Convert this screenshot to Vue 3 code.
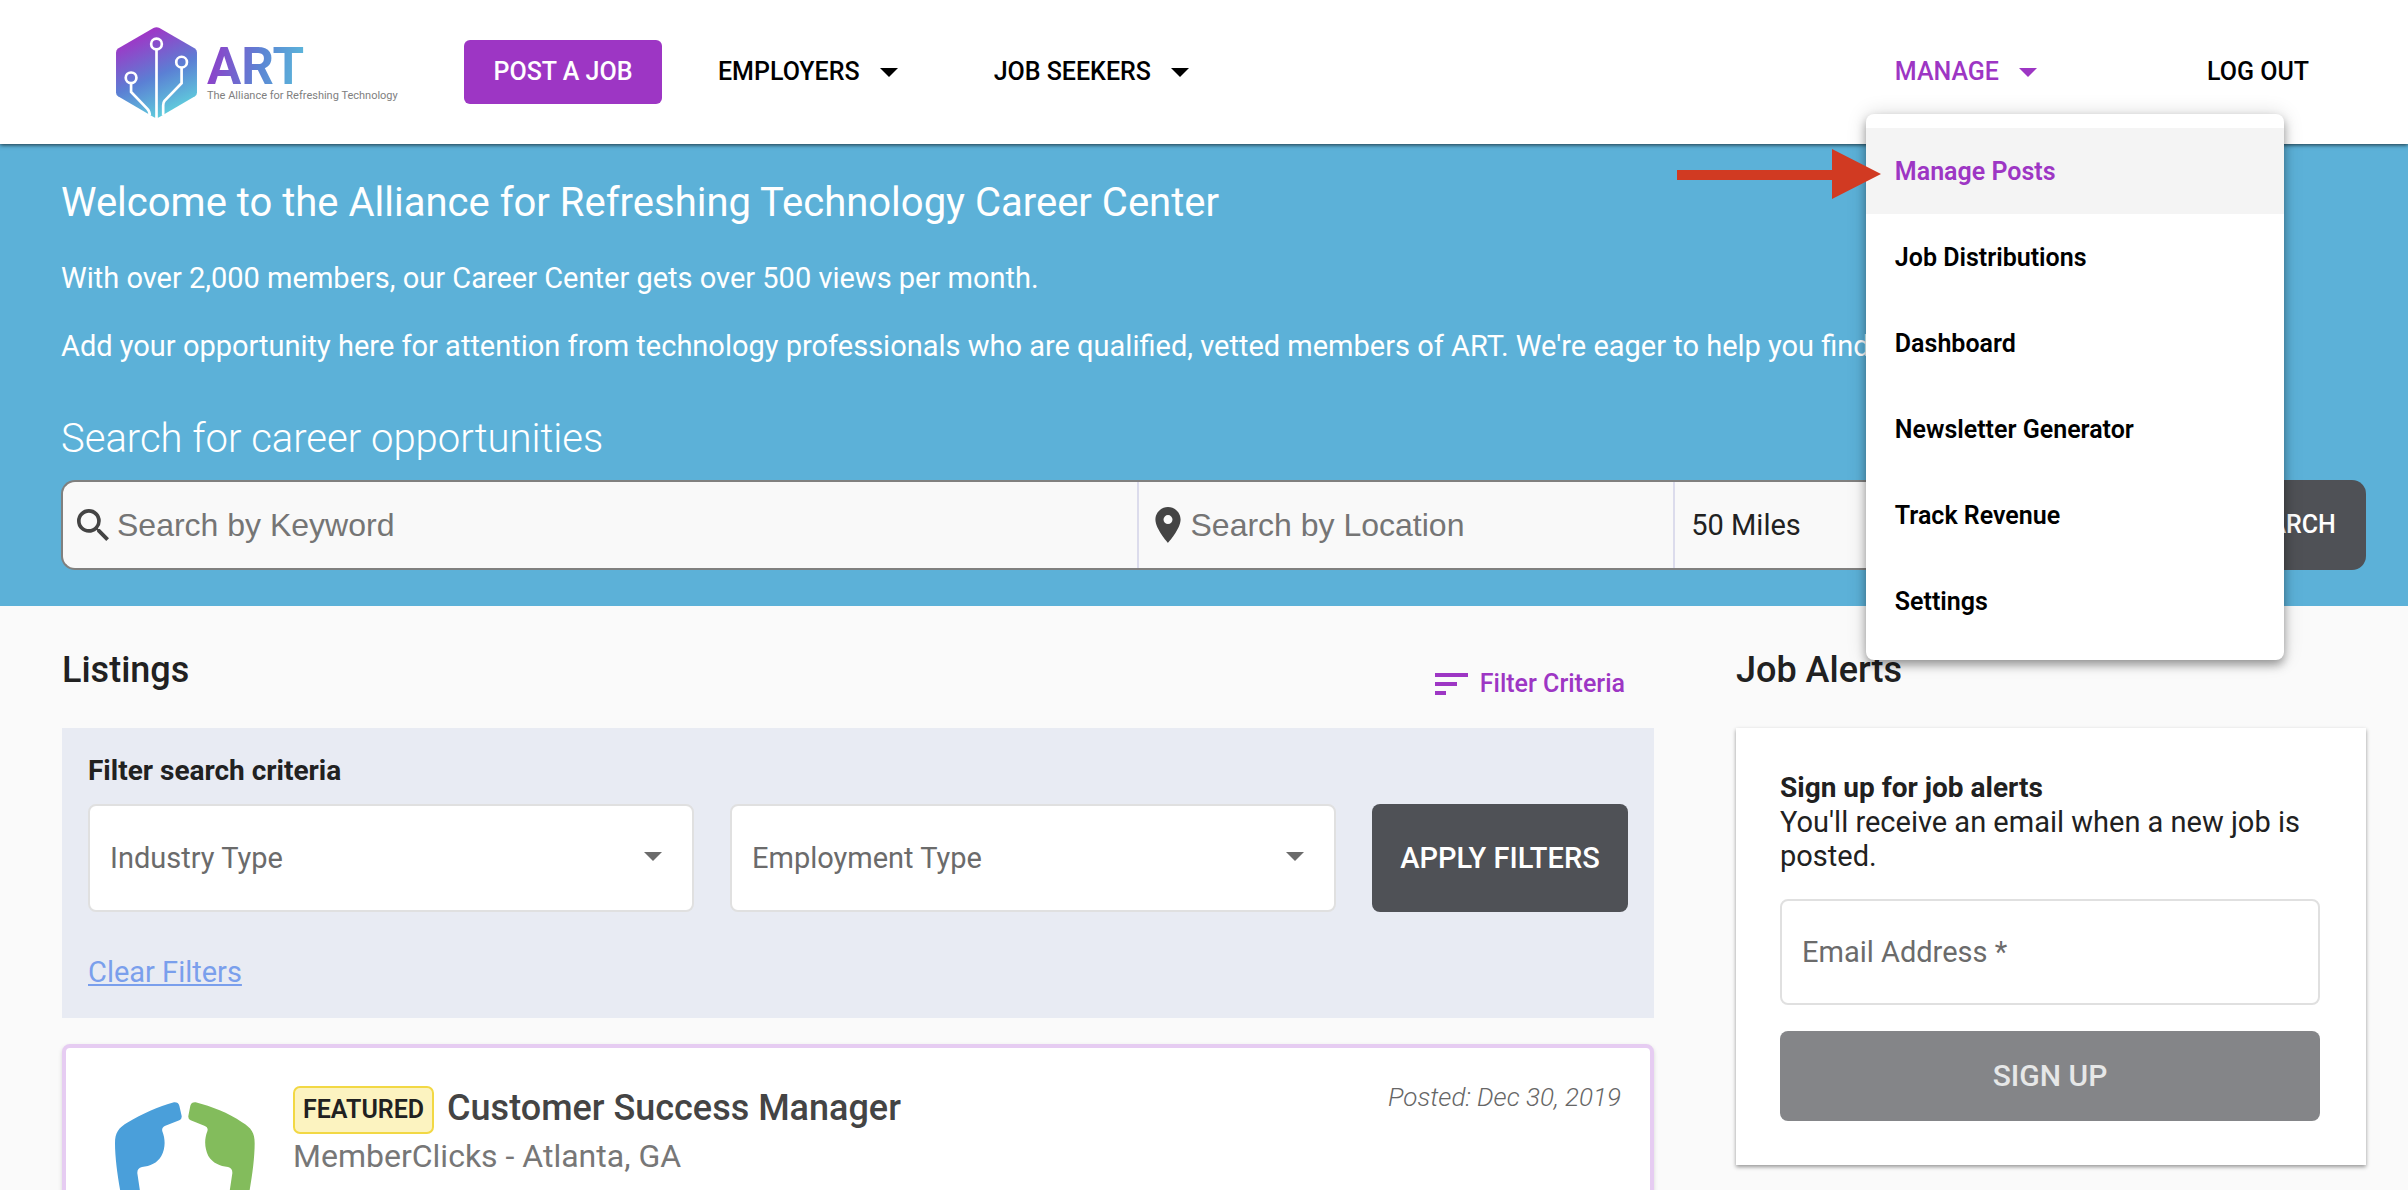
<template>
  <div class="page">
    <header class="topbar">
      <a href="#" class="logo">
        <svg class="logo-mark" viewBox="0 0 242 272" aria-hidden="true">
          <defs>
            <linearGradient id="hex" x1="0.25" y1="0" x2="0.65" y2="1">
              <stop offset="0.08" stop-color="#a035c6" />
              <stop offset="0.55" stop-color="#5b7fd4" />
              <stop offset="0.95" stop-color="#5fcbdc" />
            </linearGradient>
          </defs>
          <path
            d="M112 3 Q121 -2 130 3 L236 64 Q242 68 242 76 V196 Q242 203 236 207 L130 269 Q121 274 112 269 L6 207 Q0 203 0 196 V76 Q0 68 6 64 Z"
            fill="url(#hex)"
          />
          <g fill="none" stroke="#fff" stroke-width="8">
            <circle cx="121" cy="51" r="16" />
            <circle cx="196" cy="105" r="16" />
            <circle cx="45" cy="152" r="16" />
            <path d="M121 67 V272" />
            <path d="M196 121 V168 L145 221 Q141 226 141 234 V264" />
            <path d="M45 168 V194 L93 244 Q101 252 101 264" />
          </g>
        </svg>
        <span class="logo-words">
          <span class="logo-name">ART</span>
          <span class="logo-tag">The Alliance for Refreshing Technology</span>
        </span>
      </a>
      <button type="button" class="post-btn">POST A JOB</button>
      <nav class="nav-left">
        <button type="button" class="nav-btn">
          EMPLOYERS
          <svg class="caret" viewBox="0 0 18 9"><path d="M0 0h18l-9 9z" fill="currentColor" /></svg>
        </button>
        <button type="button" class="nav-btn">
          JOB SEEKERS
          <svg class="caret" viewBox="0 0 18 9"><path d="M0 0h18l-9 9z" fill="currentColor" /></svg>
        </button>
      </nav>
      <nav class="nav-right">
        <div class="manage">
          <button type="button" class="nav-btn active" @click="menuOpen = !menuOpen">
            MANAGE
            <svg class="caret" viewBox="0 0 18 9"><path d="M0 0h18l-9 9z" fill="currentColor" /></svg>
          </button>
          <div v-if="menuOpen" class="menu">
            <a
              v-for="item in menuItems"
              :key="item"
              href="#"
              class="menu-item"
              :class="{ selected: item === current }"
              @click.prevent="current = item"
            >{{ item }}</a>
            <svg class="pointer" viewBox="0 0 204 50" aria-hidden="true">
              <path d="M0 21h155V0l49 25-49 25V31H0z" fill="#d13a22" />
            </svg>
          </div>
        </div>
        <a href="#" class="nav-btn">LOG OUT</a>
      </nav>
    </header>

    <section class="hero">
      <h1>Welcome to the Alliance for Refreshing Technology Career Center</h1>
      <p>With over 2,000 members, our Career Center gets over 500 views per month.</p>
      <p>
        Add your opportunity here for attention from technology professionals who are qualified, vetted members of ART. We're eager to help you find t
      </p>
      <h2>Search for career opportunities</h2>
      <form class="search" @submit.prevent>
        <div class="fields">
          <label class="field keyword">
            <svg class="search-icon" viewBox="3 3 17.5 17.5">
              <path
                fill="currentColor"
                d="M15.5 14h-.79l-.28-.27A6.471 6.471 0 0 0 16 9.5 6.5 6.5 0 1 0 9.5 16c1.61 0 3.09-.59 4.23-1.57l.27.28v.79l5 4.99L20.49 19l-4.99-5zm-6 0C7.01 14 5 11.99 5 9.5S7.01 5 9.5 5 14 7.01 14 9.5 11.99 14 9.5 14z"
              />
            </svg>
            <input v-model="keyword" type="text" placeholder="Search by Keyword" aria-label="Search by Keyword" />
          </label>
          <label class="field">
            <svg class="pin-icon" viewBox="5 2 14 20">
              <path
                fill="currentColor"
                d="M12 2C8.13 2 5 5.13 5 9c0 5.25 7 13 7 13s7-7.75 7-13c0-3.87-3.13-7-7-7zm0 9.5a2.5 2.5 0 0 1 0-5 2.5 2.5 0 0 1 0 5z"
              />
            </svg>
            <input v-model="location" type="text" placeholder="Search by Location" aria-label="Search by Location" />
          </label>
          <div class="field">
            <select v-model="radius" aria-label="Radius">
              <option>50 Miles</option>
            </select>
          </div>
        </div>
        <button type="submit" class="search-btn">SEARCH</button>
      </form>
    </section>

    <main class="content">
      <section>
        <div class="section-head">
          <h2>Listings</h2>
          <button type="button" class="criteria" @click="showFilters = !showFilters">
            <svg viewBox="0 0 33 22"><path d="M0 0h33v4H0zM0 9h22v4H0zM0 18h11v4H0z" fill="currentColor" /></svg>
            Filter Criteria
          </button>
        </div>

        <form v-if="showFilters" class="filters" @submit.prevent>
          <h3>Filter search criteria</h3>
          <div class="filter-row">
            <div v-for="filter in filters" :key="filter" class="select-box">
              <select :aria-label="filter">
                <option>{{ filter }}</option>
              </select>
              <svg class="caret" viewBox="0 0 18 9"><path d="M0 0h18l-9 9z" fill="currentColor" /></svg>
            </div>
            <button type="submit" class="apply">APPLY FILTERS</button>
          </div>
          <a href="#" class="clear">Clear Filters</a>
        </form>

        <article class="job">
          <svg class="job-logo" viewBox="42 60 426 300" aria-hidden="true">
            <path
              fill="#4a9fda"
              d="M222 67 Q235 66 238 77 L245 108 Q246 117 238 121 L196 137 Q184 142 187 154 C197 180 196 205 184 228 C172 249 150 259 126 261 Q111 264 112 280 L124 360 H66 C56 310 45 240 45 190 C45 158 55 144 84 127 C125 103 175 80 222 67 Z"
            />
            <path
              fill="#83bc5c"
              d="M287 67 Q274 66 271 77 L265 108 Q264 117 272 121 L313 137 Q326 142 322 154 C312 180 314 205 325 228 C338 249 360 259 384 261 Q398 264 397 280 L385 360 H443 C454 310 464 240 464 190 C464 158 454 144 426 127 C385 98 335 80 287 67 Z"
            />
          </svg>
          <div class="job-body">
            <div class="job-title">
              <span class="badge">FEATURED</span>
              <h3>Customer Success Manager</h3>
            </div>
            <p>MemberClicks - Atlanta, GA</p>
          </div>
          <span class="posted">Posted: Dec 30, 2019</span>
        </article>
      </section>

      <aside>
        <div class="section-head">
          <h2>Job Alerts</h2>
        </div>
        <form class="alerts" @submit.prevent>
          <h3>Sign up for job alerts</h3>
          <p>You'll receive an email when a new job is posted.</p>
          <input v-model="email" type="email" placeholder="Email Address *" aria-label="Email Address" />
          <button type="submit" :disabled="!email">SIGN UP</button>
        </form>
      </aside>
    </main>
  </div>
</template>

<script setup>
import { ref } from 'vue';

const menuOpen = ref(true);
const current = ref('Manage Posts');
const menuItems = [
  'Manage Posts',
  'Job Distributions',
  'Dashboard',
  'Newsletter Generator',
  'Track Revenue',
  'Settings',
];

const keyword = ref('');
const location = ref('');
const radius = ref('50 Miles');

const showFilters = ref(true);
const filters = ['Industry Type', 'Employment Type'];

const email = ref('');
</script>

<style>
body {
  margin: 0;
  background: #fafafa;
}
</style>

<style scoped>
.page {
  height: 100vh;
  overflow: hidden;
  font-family: Roboto, "Liberation Sans", sans-serif;
  font-size: 29px;
  line-height: 34px;
  color: #212121;
}

h1,
h2,
h3,
p {
  margin: 0;
}

button,
input,
select {
  font: inherit;
  color: inherit;
  border: none;
  background: none;
  padding: 0;
  margin: 0;
  appearance: none;
  outline: none;
}

button {
  cursor: pointer;
}

.caret {
  width: 18px;
  height: 9px;
}

/* top bar */
.topbar {
  position: relative;
  z-index: 2;
  display: flex;
  align-items: center;
  height: 144px;
  padding: 0 99px 0 116px;
  background: #fff;
  box-shadow: 0 1px 4px rgba(0, 0, 0, 0.7);
}

.logo {
  display: flex;
  gap: 10px;
  width: 348px;
  text-decoration: none;
}

.logo-mark {
  width: 81px;
  height: 91px;
}

.logo-words {
  display: flex;
  flex-direction: column;
  padding-top: 17px;
}

.logo-name {
  align-self: flex-start;
  font-size: 51px;
  font-weight: 700;
  line-height: 46px;
  color: transparent;
  background: linear-gradient(100deg, #9338c8, #5b86d4 55%, #5bbcdb);
  background-clip: text;
}

.logo-tag {
  font-size: 11px;
  line-height: 12px;
  color: #808080;
}

.post-btn {
  width: 198px;
  height: 64px;
  border-radius: 6px;
  background: #9d36c4;
  color: #fff;
  font-size: 25px;
  font-weight: 500;
}

.nav-btn {
  display: flex;
  align-items: center;
  gap: 20px;
  font-size: 25px;
  font-weight: 500;
  color: #000;
  text-decoration: none;
}

.nav-btn.active {
  color: #9d36c4;
}

.nav-left {
  display: flex;
  gap: 96px;
  margin-left: 56px;
}

.nav-right {
  display: flex;
  gap: 170px;
  margin-left: auto;
}

.manage {
  position: relative;
}

.menu {
  position: absolute;
  top: 59px;
  left: -29px;
  width: 418px;
  padding: 14px 0 16px;
  border-radius: 8px;
  background: #fff;
  box-shadow: 0 5px 10px rgba(0, 0, 0, 0.35), 0 0 20px rgba(0, 0, 0, 0.15);
}

.menu-item {
  display: block;
  padding: 2px 29px 0;
  font-size: 25px;
  font-weight: 600;
  line-height: 84px;
  color: #000;
  text-decoration: none;
}

.menu-item.selected {
  background: #f4f4f4;
  color: #9d36c4;
}

.pointer {
  position: absolute;
  top: 35px;
  left: -189px;
  width: 204px;
  height: 50px;
}

/* hero */
.hero {
  padding: 35px 42px 36px 61px;
  background: #5cb1d8;
  color: #fff;
}

.hero h1 {
  font-size: 40px;
  font-weight: 400;
  line-height: 48px;
}

.hero p {
  margin-top: 34px;
  white-space: nowrap;
}

.hero h2 {
  margin-top: 52px;
  font-size: 40px;
  font-weight: 300;
  line-height: 48px;
}

.search {
  display: flex;
  height: 90px;
  margin-top: 17px;
}

.fields {
  flex: 1;
  display: grid;
  grid-template-columns: 2fr 1fr 1fr;
  box-sizing: border-box;
  border: 2px solid #80807f;
  border-right: none;
  border-radius: 14px 0 0 14px;
  background: #f9f9f9;
}

.field {
  display: flex;
  align-items: center;
  gap: 10px;
  min-width: 0;
  padding-left: 16px;
  border-left: 2px solid #dcdcec;
  color: #444;
}

.field.keyword {
  gap: 8px;
  padding-left: 14px;
  border-left: none;
}

.field input {
  flex: 1;
  min-width: 0;
  font-family: "Liberation Sans", Arial, sans-serif;
  font-size: 32px;
  line-height: 40px;
}

.field input::placeholder {
  color: #757575;
  opacity: 1;
}

.field select {
  flex: 1;
  color: #212121;
}

.search-icon {
  width: 32px;
  height: 32px;
}

.pin-icon {
  width: 26px;
  height: 36px;
}

.search-btn {
  width: 156px;
  border-radius: 0 14px 14px 0;
  background: #4f5156;
  color: #fff;
  font-size: 25px;
  font-weight: 500;
}

/* listings */
.content {
  display: grid;
  grid-template-columns: 1592fr 630fr;
  gap: 82px;
  padding: 42px 42px 0 62px;
}

.section-head {
  display: flex;
  justify-content: space-between;
  height: 53px;
  margin-bottom: 27px;
}

.section-head h2 {
  font-size: 36px;
  font-weight: 500;
  line-height: 44px;
}

.criteria {
  align-self: flex-end;
  display: flex;
  align-items: center;
  gap: 12px;
  margin-right: 29px;
  font-size: 25px;
  font-weight: 500;
  color: #9d36c4;
}

.criteria svg {
  width: 33px;
  height: 22px;
}

.filters {
  padding: 25px 26px 29px;
  background: #e8ebf3;
}

.filters h3 {
  font-size: 28px;
  font-weight: 700;
  line-height: 36px;
}

.filter-row {
  display: flex;
  gap: 36px;
  height: 108px;
  margin: 15px 0 43px;
}

.select-box {
  position: relative;
  flex: 1;
  display: flex;
  color: #6b6b6b;
}

.select-box select {
  width: 100%;
  box-sizing: border-box;
  padding-left: 20px;
  border: 2px solid #e0e0e0;
  border-radius: 8px;
  background: #fff;
}

.select-box .caret {
  position: absolute;
  top: 48px;
  right: 32px;
}

.apply {
  width: 256px;
  border-radius: 8px;
  background: #4f5156;
  color: #fff;
  font-size: 29px;
  font-weight: 500;
}

.clear {
  display: inline-block;
  vertical-align: top;
  color: #7a9fec;
}

.job {
  display: flex;
  align-items: flex-start;
  box-sizing: border-box;
  min-height: 260px;
  margin-top: 26px;
  padding: 32px 29px 32px 48px;
  border: 4px solid #e6ccf2;
  border-radius: 8px;
  background: #fff;
  box-shadow: 0 2px 4px rgba(0, 0, 0, 0.15);
}

.job-logo {
  width: 142px;
  height: 100px;
  margin-top: 20px;
}

.job-body {
  flex: 1;
  margin: 6px 0 0 37px;
}

.job-title {
  display: flex;
  align-items: flex-start;
  gap: 13px;
}

.badge {
  padding: 0 8px;
  border: 2px solid #f2d844;
  border-radius: 7px;
  background: #fcf3c0;
  font-size: 25px;
  font-weight: 600;
  line-height: 44px;
}

.job h3 {
  font-size: 36px;
  font-weight: 500;
  line-height: 44px;
  color: #444;
}

.job p {
  margin-top: 2px;
  font-size: 32px;
  line-height: 40px;
  color: #777;
}

.posted {
  font-size: 26px;
  font-style: italic;
  font-weight: 300;
  color: #666;
}

/* job alerts */
.alerts {
  display: flex;
  flex-direction: column;
  padding: 43px 46px 44px 44px;
  background: #fff;
  box-shadow: 0 2px 4px rgba(0, 0, 0, 0.4);
}

.alerts h3 {
  font-size: 28px;
  font-weight: 700;
}

.alerts input {
  box-sizing: border-box;
  height: 106px;
  margin: 26px 0;
  padding: 0 20px;
  border: 2px solid #e0e0e0;
  border-radius: 8px;
}

.alerts input::placeholder {
  color: #6b6b6b;
  opacity: 1;
}

.alerts button {
  height: 90px;
  border-radius: 8px;
  background: #848588;
  color: #e6e7e7;
  font-size: 30px;
  font-weight: 500;
}
</style>
